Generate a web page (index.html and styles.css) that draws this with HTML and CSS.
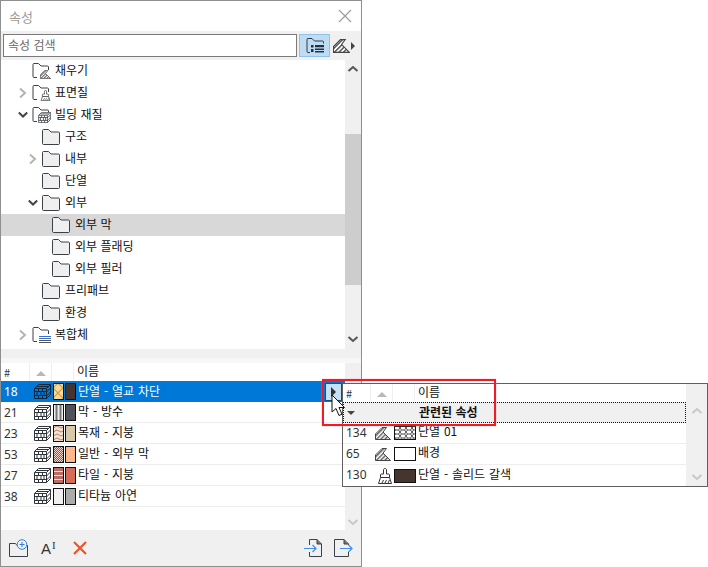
FILE: index.html
```html
<!DOCTYPE html>
<html lang="ko">
<head>
<meta charset="utf-8">
<title>속성</title>
<link rel="stylesheet" href="styles.css">
</head>
<body>
<svg class="defs" width="0" height="0" aria-hidden="true">
  <defs>
    <pattern id="hatch" width="3" height="3" patternUnits="userSpaceOnUse" patternTransform="rotate(45)">
      <rect width="3" height="3" fill="#fff"/><rect width="1.4" height="3" fill="#555"/>
    </pattern>
    <pattern id="brickp" width="10" height="10" patternUnits="userSpaceOnUse">
      <rect width="10" height="10" fill="#f4d9a0"/>
      <path d="M0 5 5 0 10 5 5 10Z" fill="none" stroke="#dba030" stroke-width="1.2"/>
    </pattern>
    <pattern id="wave" width="8" height="4" patternUnits="userSpaceOnUse">
      <rect width="8" height="4" fill="#f3e3d5"/>
      <path d="M0 3 4 1 8 3" fill="none" stroke="#bd8068" stroke-width="1"/>
    </pattern>
    <pattern id="dots" width="2" height="2" patternUnits="userSpaceOnUse">
      <rect width="2" height="2" fill="#f3d6cc"/><rect width="1" height="1" fill="#b4483c"/><rect x="1" y="1" width="1" height="1" fill="#b4483c"/>
    </pattern>
    <pattern id="cross" width="6" height="4" patternUnits="userSpaceOnUse">
      <rect width="6" height="4" fill="#fff"/>
      <path d="M0 2 1.500 0h3L6 2 4.500 4h-3z" fill="none" stroke="#222" stroke-width=".8"/>
    </pattern>
    <symbol id="folder" viewBox="0 0 18 16">
      <path d="M.5 14.500V1.500c0-.6.4-1 1-1h5L9 3h7.500c.6 0 1 .4 1 1v10.500c0 .6-.4 1-1 1h-15c-.6 0-1-.4-1-1z" fill="#efefef" stroke="#3b4148"/>
    </symbol>
    <symbol id="folder-open" viewBox="0 0 18 16">
      <path d="M5 14.500H2c-.6 0-1-.4-1-1V1.500c0-.6.4-1 1-1h4.500L9 3h6.500c.6 0 1 .4 1 1v3" fill="none" stroke="#3b4148"/>
    </symbol>
    <symbol id="brick" viewBox="0 0 17 15">
      <path d="M.5 4.500 4.500.5h12v10l-4 4H.5z" fill="#fff" stroke="#2f353b"/>
      <path d="M.5 4.500h12v10M12.500 4.500l4-4M.5 7.500h12M.5 11.500h12M4.500 4.500v3M8.500 4.500v3M3 7.500v4M7 7.500v4M10 7.500v4M4.500 11.500v3M8.500 11.500v3M12.500 8l4-4M12.500 12l4-4M3 2.500h11" fill="none" stroke="#2f353b"/>
    </symbol>
    <symbol id="brick-sel" viewBox="0 0 17 15">
      <path d="M.5 4.500 4.500.5h12v10l-4 4H.5z" fill="none" stroke="#10263c"/>
      <path d="M.5 4.500h12v10M12.500 4.500l4-4M.5 7.500h12M.5 11.500h12M4.500 4.500v3M8.500 4.500v3M3 7.500v4M7 7.500v4M10 7.500v4M4.500 11.500v3M8.500 11.500v3M12.500 8l4-4M12.500 12l4-4M3 2.500h11" fill="none" stroke="#10263c"/>
    </symbol>
    <symbol id="fillicon" viewBox="0 0 16 13">
      <path d="M.5 12.500V7L7 .5h4.500L8 5l7.500 7.500z" fill="url(#hatch)" stroke="#444"/>
    </symbol>
    <symbol id="brushicon" viewBox="0 0 14 16">
      <path d="M7 .5c.9 0 1.500.6 1.500 1.400V6h2c.6 0 1 .4 1 1v2.500h-9V7c0-.6.4-1 1-1h2V1.900C5.500 1.100 6.100.5 7 .5z" fill="#fff" stroke="#333"/>
      <path d="M2.500 9.500h9l2 6H.5z" fill="#fff" stroke="#333"/>
      <path d="M4 15l1.500-3M7 15l1.500-3M10 15l1.500-3" stroke="#333"/>
    </symbol>
  </defs>
</svg>

<main class="panel">
  <header class="title">
    <span class="title-text">속성</span>
    <svg class="close" width="14" height="14" viewBox="0 0 14 14"><path d="M1 1 13 13M13 1 1 13" stroke="#9a9a9a" stroke-width="1.100"/></svg>
  </header>

  <div class="toolbar">
    <div class="search">속성 검색</div>
    <button class="tool-on" type="button">
      <svg width="18" height="16" viewBox="0 0 18 16">
        <path d="M4 14.500H2c-.6 0-1-.4-1-1V1.500c0-.6.400-1 1-1h4L8.500 3h8c.6 0 1 .4 1 1v1.500" fill="none" stroke="#2d3a46"/>
        <path d="M5 7h2.500v2.500H5zM5 11h2.500v3H5zM9 7h9v2.200H9zM9 10.500h9v1.500H9zM9 13h9v1.500H9z" fill="#223240"/>
      </svg>
    </button>
    <div class="tool-fill">
      <svg width="17" height="14"><use href="#fillicon"/></svg>
      <i class="tri-right"></i>
    </div>
  </div>

  <section class="tree-wrap">
    <ul class="tree">
      <li class="node l1"><span class="chev"></span>
        <span class="ficon"><svg width="18" height="16"><use href="#folder-open"/></svg><svg class="badge" width="11" height="9"><use href="#fillicon"/></svg></span>
        <span class="label">채우기</span></li>
      <li class="node l1"><svg class="chev" width="10" height="12" viewBox="0 0 10 12"><path d="M2 1.500 7 6 2 10.500" fill="none" stroke="#b4b4b4" stroke-width="2"/></svg>
        <span class="ficon"><svg width="18" height="16"><use href="#folder-open"/></svg><svg class="badge" width="11" height="11"><use href="#brushicon"/></svg></span>
        <span class="label">표면질</span></li>
      <li class="node l1"><svg class="chev" width="10" height="12" viewBox="0 0 10 12"><path d="M.8 3.500 5 7.500 9.200 3.500" fill="none" stroke="#444" stroke-width="2"/></svg>
        <span class="ficon"><svg width="18" height="16"><use href="#folder-open"/></svg><svg class="badge" width="13" height="11"><use href="#brick"/></svg></span>
        <span class="label">빌딩 재질</span></li>
      <li class="node l2"><span class="chev"></span><svg class="f" width="18" height="16"><use href="#folder"/></svg><span class="label">구조</span></li>
      <li class="node l2"><svg class="chev" width="10" height="12" viewBox="0 0 10 12"><path d="M2 1.500 7 6 2 10.500" fill="none" stroke="#b4b4b4" stroke-width="2"/></svg><svg class="f" width="18" height="16"><use href="#folder"/></svg><span class="label">내부</span></li>
      <li class="node l2"><span class="chev"></span><svg class="f" width="18" height="16"><use href="#folder"/></svg><span class="label">단열</span></li>
      <li class="node l2"><svg class="chev" width="10" height="12" viewBox="0 0 10 12"><path d="M.8 3.500 5 7.500 9.200 3.500" fill="none" stroke="#444" stroke-width="2"/></svg><svg class="f" width="18" height="16"><use href="#folder"/></svg><span class="label">외부</span></li>
      <li class="node l3 current"><span class="chev"></span><svg class="f" width="18" height="16"><use href="#folder"/></svg><span class="label">외부 막</span></li>
      <li class="node l3"><span class="chev"></span><svg class="f" width="18" height="16"><use href="#folder"/></svg><span class="label">외부 플래딩</span></li>
      <li class="node l3"><span class="chev"></span><svg class="f" width="18" height="16"><use href="#folder"/></svg><span class="label">외부 필러</span></li>
      <li class="node l2"><span class="chev"></span><svg class="f" width="18" height="16"><use href="#folder"/></svg><span class="label">프리패브</span></li>
      <li class="node l2"><span class="chev"></span><svg class="f" width="18" height="16"><use href="#folder"/></svg><span class="label">환경</span></li>
      <li class="node l1"><svg class="chev" width="10" height="12" viewBox="0 0 10 12"><path d="M2 1.500 7 6 2 10.500" fill="none" stroke="#b4b4b4" stroke-width="2"/></svg>
        <span class="ficon"><svg width="18" height="16"><use href="#folder-open"/></svg><svg class="badge" width="13" height="7" viewBox="0 0 13 7"><path d="M1 .5h12M1 2.500h12" stroke="#3a6fd0"/><path d="M1 4.500h12M1 6.500h12" stroke="#555"/></svg></span>
        <span class="label">복합체</span></li>
    </ul>
    <div class="scrollbar">
      <svg class="arrow" width="12" height="8" viewBox="0 0 12 8"><path d="M1.500 6 6 2l4.500 4" fill="none" stroke="#555" stroke-width="2"/></svg>
      <div class="thumb"></div>
      <svg class="arrow" width="12" height="8" viewBox="0 0 12 8"><path d="M1.500 2 6 6l4.500-4" fill="none" stroke="#555" stroke-width="2"/></svg>
    </div>
  </section>

  <div class="divider"></div>

  <section class="list-wrap">
    <div class="list">
      <div class="head">
        <span class="hc hc-num">#</span>
        <span class="hc hc-sort"><i class="tri-up"></i></span>
        <span class="hc hc-sw"></span>
        <span class="hc hc-name"><span class="head-text">이름</span></span>
      </div>
      <div class="row selected">
        <span class="num">18</span><svg class="bicon" width="17" height="15"><use href="#brick-sel"/></svg>
        <svg class="sw" width="11" height="17"><rect x=".5" y=".5" width="10" height="16" fill="url(#brickp)" stroke="#111"/></svg>
        <span class="sw solid c18"></span><span class="name">단열 - 열교 차단</span>
      </div>
      <div class="row">
        <span class="num">21</span><svg class="bicon" width="17" height="15"><use href="#brick"/></svg>
        <svg class="sw" width="11" height="17"><rect x=".5" y=".5" width="10" height="16" fill="#eee" stroke="#111"/><path d="M3.500 1v15M7.500 1v15" stroke="#777" stroke-width="2"/></svg>
        <span class="sw solid c21"></span><span class="name">막 - 방수</span>
      </div>
      <div class="row">
        <span class="num">23</span><svg class="bicon" width="17" height="15"><use href="#brick"/></svg>
        <svg class="sw" width="11" height="17"><rect x=".5" y=".5" width="10" height="16" fill="url(#wave)" stroke="#111"/></svg>
        <span class="sw solid c23"></span><span class="name">목재 - 지붕</span>
      </div>
      <div class="row">
        <span class="num">53</span><svg class="bicon" width="17" height="15"><use href="#brick"/></svg>
        <svg class="sw" width="11" height="17"><rect x=".5" y=".5" width="10" height="16" fill="url(#dots)" stroke="#111"/></svg>
        <span class="sw solid c53"></span><span class="name">일반 - 외부 막</span>
      </div>
      <div class="row">
        <span class="num">27</span><svg class="bicon" width="17" height="15"><use href="#brick"/></svg>
        <svg class="sw" width="11" height="17"><rect x=".5" y=".5" width="10" height="16" fill="#b76d63" stroke="#111"/><path d="M1 4.500h9M1 8.500h9M1 12.500h9" stroke="#f1dfd6" stroke-width="1.200"/></svg>
        <span class="sw solid c27"></span><span class="name">타일 - 지붕</span>
      </div>
      <div class="row">
        <span class="num">38</span><svg class="bicon" width="17" height="15"><use href="#brick"/></svg>
        <svg class="sw" width="11" height="17"><rect x=".5" y=".5" width="10" height="16" fill="#f0f0f0" stroke="#111"/></svg>
        <span class="sw solid c38"></span><span class="name">티타늄 아연</span>
      </div>
    </div>
    <div class="scrollbar plain">
      <svg class="arrow" width="12" height="8" viewBox="0 0 12 8"><path d="M1.500 2 6 6l4.500-4" fill="none" stroke="#c8c8c8" stroke-width="2"/></svg>
    </div>
  </section>

  <footer class="bottom">
    <svg width="19" height="18" viewBox="0 0 19 18">
      <path d="M.5 17.500V4.500h6l1.500 2h10.500v11z" fill="none" stroke="#3b4148"/>
      <circle cx="13" cy="5.500" r="4.800" fill="#f0f0f0" stroke="#2f7fdc"/>
      <path d="M13 3v5M10.500 5.500h5" stroke="#2f7fdc"/>
    </svg>
    <span class="rename">A<sup>I</sup></span>
    <svg class="del" width="14" height="14" viewBox="0 0 14 14"><path d="M1 1 13 13M13 1 1 13" stroke="#f0502a" stroke-width="2.200"/></svg>
    <span class="spacer"></span>
    <svg width="18" height="18" viewBox="0 0 18 18">
      <path d="M5.500 6V.5H13L17.500 5v12.500h-12V13" fill="none" stroke="#3b4148"/><path d="M13 .5V5h4.500" fill="#777" stroke="#3b4148"/>
      <path d="M0 9.500h12M8.500 6l3.500 3.500L8.500 13" fill="none" stroke="#3f8fe8" stroke-width="1.200"/>
    </svg>
    <svg class="exp" width="19" height="18" viewBox="0 0 19 18">
      <path d="M14.500 6V5L10 .5H.5v17h14V13" fill="none" stroke="#3b4148"/><path d="M10 .5V5h4.500" fill="#777" stroke="#3b4148"/>
      <path d="M6 9.500h12M14.500 6l3.500 3.500-3.500 3.500" fill="none" stroke="#3f8fe8" stroke-width="1.200"/>
    </svg>
  </footer>
</main>

<aside class="popup">
  <div class="p-main">
    <div class="p-head">
      <span class="p-h-num">#</span>
      <span class="p-h-sort"><i class="tri-up"></i></span>
      <span class="p-h-sw"></span>
      <span class="p-h-name"><span class="head-text">이름</span></span>
    </div>
    <div class="p-group"><i class="tri-down"></i><b>관련된 속성</b></div>
    <div class="p-row">
      <span class="p-num">134</span><svg class="p-icon" width="16" height="13"><use href="#fillicon"/></svg>
      <svg class="p-sw" width="22" height="14"><rect x=".5" y=".5" width="21" height="13" fill="url(#cross)" stroke="#111"/></svg>
      <span class="name">단열 01</span>
    </div>
    <div class="p-row">
      <span class="p-num">65</span><svg class="p-icon" width="16" height="13"><use href="#fillicon"/></svg>
      <svg class="p-sw" width="22" height="14"><rect x=".5" y=".5" width="21" height="13" fill="#fff" stroke="#111"/></svg>
      <span class="name">배경</span>
    </div>
    <div class="p-row">
      <span class="p-num">130</span><span class="p-brush"><svg width="14" height="16"><use href="#brushicon"/></svg></span>
      <svg class="p-sw" width="22" height="14"><rect x=".5" y=".5" width="21" height="13" fill="#46352f" stroke="#111"/></svg>
      <span class="name">단열 - 솔리드 갈색</span>
    </div>
  </div>
  <div class="p-scroll">
    <svg width="12" height="8" viewBox="0 0 12 8"><path d="M1.500 6 6 2l4.500 4" fill="none" stroke="#c8c8c8" stroke-width="2"/></svg>
    <svg width="12" height="8" viewBox="0 0 12 8"><path d="M1.500 2 6 6l4.500-4" fill="none" stroke="#c8c8c8" stroke-width="2"/></svg>
  </div>
</aside>

<div class="expander"><i class="tri-right dark"></i></div>
<div class="redbox"></div>
<svg class="cursor" width="16" height="24" viewBox="0 0 16 24"><path d="M1 1v17l4-3.500 3 7 3-1.300-3-6.700h5.500z" fill="#fff" stroke="#111"/></svg>
</body>
</html>
```

FILE: styles.css
```css
* { box-sizing: border-box; }
html, body { margin: 0; padding: 0; }
body {
  width: 708px;
  height: 567px;
  overflow: hidden;
  position: relative;
  background: #fff;
  font-family: "Noto Sans CJK KR", "Noto Sans", sans-serif;
  font-size: 12px;
  color: #111;
}
.defs { position: absolute; }
ul { list-style: none; margin: 0; padding: 0; }

.panel {
  width: 362px;
  height: 567px;
  border: 1px solid #8f8f8f;
  display: flex;
  flex-direction: column;
  background: #f0f0f0;
}
.title {
  height: 30px;
  flex: none;
  background: #fff;
  display: flex;
  align-items: center;
  justify-content: space-between;
  padding: 0 9px 0 8px;
  color: #9a9a9a;
  font-size: 13px;
}
.toolbar {
  height: 29px;
  flex: none;
  display: flex;
  align-items: center;
  padding: 0 0 0 2px;
}
.search {
  width: 294px;
  height: 23px;
  background: #fff;
  border: 1px solid #7a7a7a;
  padding-left: 4px;
  line-height: 20px;
  color: #6a6a6a;
}
.tool-on {
  margin-left: 2px;
  width: 31px;
  height: 23px;
  padding: 0;
  background: #bfdcf3;
  border: 1px solid #8cc4ee;
  display: flex;
  align-items: center;
  justify-content: center;
}
.tool-fill { display: flex; align-items: center; margin-left: 3px; }
.tool-fill svg { display: block; }
.tri-right {
  display: block;
  width: 0; height: 0;
  margin-left: 1px;
  border-left: 4px solid #444;
  border-top: 4px solid transparent;
  border-bottom: 4px solid transparent;
}

.tree-wrap { height: 289px; flex: none; display: flex; background: #fff; }
.tree { width: 344px; flex: none; }
.node { height: 22px; display: flex; align-items: center; }
.node.l1 { padding-left: 17px; }
.node.l2 { padding-left: 27px; }
.node.l3 { padding-left: 37px; }
.node.current { background: #d8d8d8; }
.chev { width: 10px; height: 12px; flex: none; margin-right: 4px; display: block; }
.ficon { position: relative; width: 18px; height: 16px; display: block; flex: none; }
.ficon svg { display: block; }
.ficon .badge { position: absolute; right: -1px; bottom: 0; }
.f { display: block; flex: none; }
.label { margin-left: 5px; line-height: 16px; white-space: pre; position: relative; top: -1px; }

.scrollbar {
  width: 16px;
  flex: none;
  background: #f0f0f0;
  display: flex;
  flex-direction: column;
  align-items: center;
  padding-top: 5px;
}
.thumb { width: 16px; height: 151px; background: #cdcdcd; margin-top: 61px; margin-bottom: 50px; flex: none; }
.arrow { display: block; flex: none; }
.scrollbar.plain { padding-top: 155px; }

.divider { height: 14px; flex: none; background: linear-gradient(#f0f0f0 0 9px, #f7f7f7 9px); }

.list-wrap { height: 167px; flex: none; display: flex; background: #fff; }
.list { width: 344px; flex: none; }
.head { height: 18px; display: flex; background: #fff; }
.hc { display: flex; align-items: center; border-right: 1px solid #efefef; }
.hc-num { width: 29px; padding-left: 3px; font-size: 11px; color: #333; }
.hc-sort { width: 22px; justify-content: center; background: #fff; padding-top: 3px; }
.hc-sw { width: 22px; }
.hc-name { flex: 1; padding-left: 3px; border-right: 0; }
.head-text { position: relative; top: -1px; line-height: 16px; }
.tri-up {
  display: block; width: 0; height: 0;
  border-left: 5px solid transparent;
  border-right: 5px solid transparent;
  border-bottom: 5px solid #b8b8b8;
}
.row {
  height: 21px;
  display: flex;
  align-items: center;
  border-bottom: 1px solid #ececec;
  padding-left: 3px;
}
.row.selected { background: #0078d7; color: #fff; border-bottom: 0; }
.num { width: 29px; flex: none; font-family: "Noto Sans", sans-serif; font-size: 12px; color: #333; }
.selected .num { color: #fff; }
.bicon { flex: none; display: block; margin: 0 2px 0 1px; }
.sw { flex: none; display: block; width: 11px; height: 17px; margin-right: 1px; }
.sw.solid { border: 1px solid #111; margin-right: 2px; }
.c18 { background: #46352f; }
.c21 { background: #50525a; }
.c23 { background: #d8c8a8; }
.c53 { background: #feb78a; }
.c27 { background: #d46c58; }
.c38 { background: #ababab; }
.name { white-space: pre; line-height: 16px; position: relative; top: -1px; word-spacing: .5px; }

.bottom {
  flex: 1;
  display: flex;
  align-items: center;
  padding: 0 8px 0 8px;
}
.rename { font-family: "Liberation Sans", sans-serif; font-size: 15px; color: #333; margin-left: 13px; line-height: 15px; width: 17px; flex: none; white-space: nowrap; }
.rename sup { font-family: "Liberation Serif", serif; font-size: 11px; line-height: 0; vertical-align: 5px; margin-left: 1px; }
.del { margin-left: 15px; }
.spacer { flex: 1; }
.exp { margin-left: 12px; }
.bottom svg { display: block; flex: none; }

.popup {
  position: absolute;
  left: 342px;
  top: 383px;
  width: 366px;
  height: 104px;
  background: #fff;
  border: 1px solid #5f5f5f;
  display: flex;
}
.p-main { width: 343px; flex: none; }
.p-head { height: 18px; display: flex; }
.p-head > span { display: flex; align-items: center; border-right: 1px solid #efefef; }
.p-h-num { width: 28px; padding-left: 3px; font-size: 11px; color: #333; }
.p-h-sort { width: 22px; justify-content: center; padding-top: 2px; }
.p-h-sw { width: 22px; }
.p-head > .p-h-name { flex: 1; padding-left: 3px; border-right: 0; }
.p-group {
  height: 21px;
  background: #f0f0f0;
  border: 1px dotted #111;
  display: flex;
  align-items: center;
  position: relative;
  padding-left: 75px;
}
.p-group b { font-weight: 700; font-size: 12px; line-height: 16px; position: relative; top: -1px; }
.tri-down {
  position: absolute;
  left: 3px;
  top: 8px;
  width: 0; height: 0;
  border-left: 4px solid transparent;
  border-right: 4px solid transparent;
  border-top: 4px solid #444;
}
.p-row {
  height: 21px;
  display: flex;
  align-items: center;
  border-bottom: 1px solid #eee;
  padding-left: 3px;
}
.p-row:last-child { border-bottom: 0; }
.p-row .name { top: -2px; }
.p-num { width: 29px; flex: none; font-family: "Noto Sans", sans-serif; color: #333; position: relative; top: -1px; }
.p-icon { flex: none; display: block; margin-right: 3px; }
.p-brush { width: 16px; flex: none; margin-right: 3px; padding-left: 3px; }
.p-brush svg { display: block; }
.p-sw { flex: none; display: block; margin-right: 2px; }
.p-scroll {
  flex: 1;
  background: #f0f0f0;
  display: flex;
  flex-direction: column;
  align-items: center;
  justify-content: space-between;
  padding: 23px 0 5px;
}
.p-scroll svg { display: block; }

.expander {
  position: absolute;
  left: 325px;
  top: 383px;
  width: 17px;
  height: 18px;
  background: #c5dff5;
  border: 1px solid #0d4f8a;
  display: flex;
  align-items: center;
  justify-content: center;
}
.tri-right.dark { border-left-color: #333; border-left-width: 5px; border-top-width: 5px; border-bottom-width: 5px; margin: 0; }
.redbox {
  position: absolute;
  left: 322px;
  top: 379px;
  width: 174px;
  height: 47px;
  border: 2px solid #ee1c25;
  box-shadow: 0 0 1px #f88;
}
.cursor { position: absolute; left: 331px; top: 394px; display: block; }
```
